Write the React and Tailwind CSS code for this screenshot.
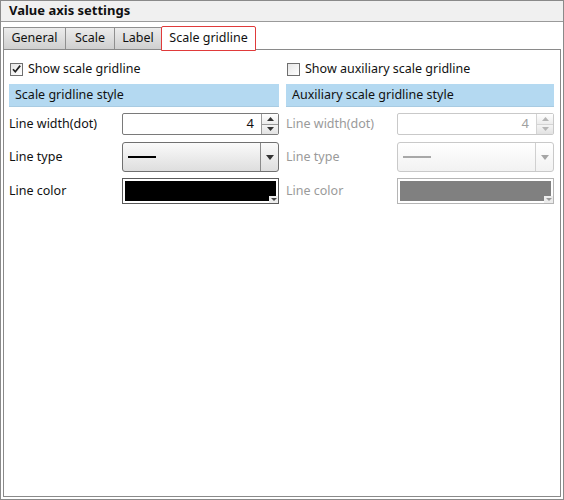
import React from "react";

const font = { fontFamily: '"Noto Sans", "Liberation Sans", sans-serif' };

const Tab = ({ label, active, w }) =>
  active ? (
    <div className={`relative z-10 -mb-[2px] flex h-[25px] items-center justify-center rounded-t-[2px] border border-[#e03a3a] bg-white text-[12.5px] text-[#111] ${w}`}>
      {label}
    </div>
  ) : (
    <div className={`-mr-px flex h-[22px] items-center justify-center border border-b-0 border-[#8f8f8f] bg-gradient-to-b from-[#ececec] to-[#cfcfcf] text-[12.5px] text-[#111] ${w}`}>
      {label}
    </div>
  );

const Checkbox = ({ checked, label }) => (
  <div className="flex h-[18px] items-center gap-[5px] text-[12.5px] text-[#111]">
    <div className="relative ml-px h-[13px] w-[13px] border border-[#6f6f6f] bg-gradient-to-br from-[#e6e6e6] to-white">
      {checked && (
        <svg viewBox="0 0 13 13" className="absolute -left-px -top-px h-[13px] w-[13px]">
          <path d="M3 6.2 L5.3 8.8 L10.2 2.6" fill="none" stroke="#222" strokeWidth="1.7" />
        </svg>
      )}
    </div>
    <span>{label}</span>
  </div>
);

const StyleBar = ({ label }) => (
  <div className="mt-[6px] flex h-[23px] items-center border-b border-[#a8cbe2] bg-[#b4d9f1] pl-[6px] text-[12.5px] text-[#111]">
    {label}
  </div>
);

const Row = ({ label, disabled, h, mt, children }) => (
  <div className={`flex items-center justify-between ${mt} ${h}`}>
    <span className={`text-[12.5px] ${disabled ? "text-[#9a9a9a]" : "text-[#111]"}`}>{label}</span>
    {children}
  </div>
);

const Spin = ({ disabled }) => (
  <div
    className={`flex h-[22px] w-[157px] rounded-[2px] border bg-white ${
      disabled ? "border-[#c9c9c9]" : "border-[#7a7a7a]"
    }`}
  >
    <div
      className={`flex flex-1 items-center justify-end pr-[7px] text-[13px] ${
        disabled ? "text-[#a0a0a0]" : "text-[#111]"
      }`}
    >
      4
    </div>
    <div className={`flex w-[17px] flex-col border-l ${disabled ? "border-[#d4d4d4]" : "border-[#9a9a9a]"}`}>
      <div className={`flex flex-1 items-center justify-center border-b ${disabled ? "border-[#d4d4d4]" : "border-[#9a9a9a]"} bg-gradient-to-b from-white to-[#ececec]`}>
        <svg viewBox="0 0 7 4" className="h-[4px] w-[7px]">
          <path d="M0 4 L3.5 0 L7 4 Z" fill={disabled ? "#b5b5b5" : "#333"} />
        </svg>
      </div>
      <div className="flex flex-1 items-center justify-center bg-gradient-to-b from-[#f4f4f4] to-[#e2e2e2]">
        <svg viewBox="0 0 7 4" className="h-[4px] w-[7px]">
          <path d="M0 0 L3.5 4 L7 0 Z" fill={disabled ? "#b5b5b5" : "#333"} />
        </svg>
      </div>
    </div>
  </div>
);

const LineSelect = ({ disabled }) => (
  <div
    className={`flex h-[30px] w-[157px] rounded-[3px] border bg-gradient-to-b ${
      disabled ? "border-[#c9c9c9] from-white to-[#f2f2f2]" : "border-[#707070] from-[#fafafa] to-[#dedede]"
    }`}
  >
    <div className="flex flex-1 items-center pl-[5px]">
      <div className={`h-[2px] w-[28px] ${disabled ? "bg-[#a8a8a8]" : "bg-black"}`} />
    </div>
    <div
      className={`flex w-[18px] items-center justify-center border-l ${
        disabled ? "border-[#d0d0d0]" : "border-[#8a8a8a]"
      }`}
    >
      <svg viewBox="0 0 8 5" className="h-[5px] w-[8px]">
        <path d="M0 0 L4 5 L8 0 Z" fill={disabled ? "#a5a5a5" : "#333"} />
      </svg>
    </div>
  </div>
);

const ColorBox = ({ disabled }) => (
  <div
    className={`flex h-[26px] w-[157px] border bg-white p-[2px] ${
      disabled ? "border-[#b5b5b5]" : "border-[#5a5a5a]"
    }`}
  >
    <div className={`relative flex-1 ${disabled ? "bg-[#808080]" : "bg-black"}`}>
      <div className="absolute -bottom-[2px] -right-[2px] flex h-[7px] w-[9px] items-center justify-center bg-[#ececec]">
        <svg viewBox="0 0 6 3" className="h-[3px] w-[6px]">
          <path d="M0 0 L3 3 L6 0 Z" fill={disabled ? "#999" : "#444"} />
        </svg>
      </div>
    </div>
  </div>
);

const Column = ({ check, checked, bar, disabled }) => (
  <div className="flex flex-col">
    <Checkbox checked={checked} label={check} />
    <StyleBar label={bar} />
    <Row label="Line width(dot)" disabled={disabled} mt="mt-[6px]" h="h-[22px]">
      <Spin disabled={disabled} />
    </Row>
    <Row label="Line type" disabled={disabled} mt="mt-[7px]" h="h-[30px]">
      <LineSelect disabled={disabled} />
    </Row>
    <Row label="Line color" disabled={disabled} mt="mt-[6px]" h="h-[26px]">
      <ColorBox disabled={disabled} />
    </Row>
  </div>
);

export default function App() {
  return (
    <div style={font} className="flex h-[500px] w-[564px] flex-col border border-[#8a8a8a] bg-white">
      <div className="flex h-[21px] items-center border-b border-[#9a9a9a] bg-[#f0f0f0] pl-[8px] text-[13px] font-bold text-[#111]">
        Value axis settings
      </div>
      <div className="flex flex-1 flex-col px-[2px] pb-[2px] pt-[2px]">
        <div className="flex h-[25px] items-end">
          <Tab label="General" w="w-[63px]" />
          <Tab label="Scale" w="w-[50px]" />
          <Tab label="Label" w="w-[48px]" />
          <Tab label="Scale gridline" w="w-[95px]" active />
        </div>
        <div className="grid flex-1 grid-cols-[270px_268px] content-start gap-x-[7px] border border-[#8a8a8a] pl-[5px] pt-[10px]">
          <Column check="Show scale gridline" checked bar="Scale gridline style" />
          <Column check="Show auxiliary scale gridline" bar="Auxiliary scale gridline style" disabled />
        </div>
      </div>
    </div>
  );
}
